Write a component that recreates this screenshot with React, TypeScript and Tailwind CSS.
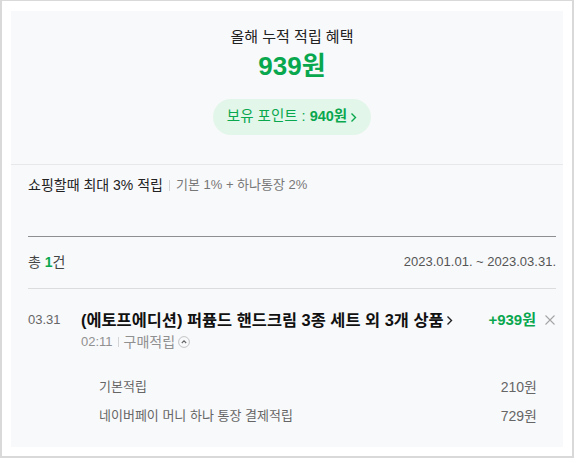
import React from "react";

function ChevronRight({ className = "", color = "#222" }: { className?: string; color?: string }) {
  return (
    <svg className={className} width="7" height="11" viewBox="0 0 7 11" fill="none">
      <path d="M1.5 1.5L5.5 5.5L1.5 9.5" stroke={color} strokeWidth="1.4" />
    </svg>
  );
}

function CloseX() {
  return (
    <svg className="ml-[9px] mr-[1px]" width="10" height="10" viewBox="0 0 10 10" fill="none">
      <path d="M0.5 0.5L9.5 9.5M9.5 0.5L0.5 9.5" stroke="#a5a5a5" strokeWidth="1.1" />
    </svg>
  );
}

function CircleUp() {
  return (
    <svg className="ml-[3px]" width="12" height="12" viewBox="0 0 12 12" fill="none">
      <circle cx="6" cy="6" r="5.4" stroke="#bdbdbd" strokeWidth="0.9" />
      <path d="M3.8 7L6 4.8L8.2 7" stroke="#666" strokeWidth="1.1" />
    </svg>
  );
}

export default function App() {
  return (
    <div className="w-[574px] h-[458px] bg-white border-t border-x-2 border-b-2 border-[#d9d9d9] pt-[10px] px-[9px] pb-[9px] font-['Liberation_Sans','Noto_Sans_CJK_KR',sans-serif]">
      <div className="h-[436px] bg-[#f8f9fb] flex flex-col">
        {/* Header summary */}
        <div className="flex flex-col items-center pl-[10px] pt-[16px] pb-[29px] border-b border-[#e6e8eb]">
          <div className="text-[15px] leading-[20px] text-[#222]">올해 누적 적립 혜택</div>
          <div className="mt-[3px] text-[26px] leading-[32px] font-bold text-[#09a74e]">939원</div>
          <div className="mt-[17px] h-[36px] w-[158px] rounded-full bg-[#e3f6ea] flex items-center justify-center text-[14.5px] text-[#09a74e]">
            <span>보유 포인트 : </span>
            <span className="ml-[4px] font-bold">940원</span>
            <ChevronRight className="ml-[3px]" color="#09a74e" />
          </div>
        </div>

        {/* Content */}
        <div className="pl-[17px] pr-[7px] flex flex-col">
          <div className="pt-[10px] flex items-center leading-[20px]">
            <span className="text-[14px] text-[#222]">쇼핑할때 최대 3% 적립</span>
            <span className="mx-[6px] w-px h-[11px] bg-[#d5d5d5]" />
            <span className="text-[13px] text-[#777]">기본 1% + 하나통장 2%</span>
          </div>

          <div className="mt-[41px] border-t border-[#8f8f8f] pt-[15px] pb-[16px] border-b-[#dcdcdc] border-b flex items-center justify-between text-[13px] leading-[20px]">
            <span className="text-[14px] text-[#444]">
              총 <span className="text-[#09a74e] font-semibold">1</span>건
            </span>
            <span className="text-[#555]">2023.01.01. ~ 2023.03.31.</span>
          </div>

          <div className="pt-[20px] flex">
            <div className="w-[53px] text-[13px] leading-[22px] text-[#666]">03.31</div>
            <div className="flex-1 flex flex-col">
              <div className="flex items-center justify-between">
                <div className="flex items-center text-[16.4px] leading-[22px] font-bold text-[#111]">
                  <span>(에토프에디션) 퍼퓸드 핸드크림 3종 세트 외 3개 상품</span>
                  <ChevronRight className="ml-[2px]" color="#222" />
                </div>
                <div className="flex items-center">
                  <span className="text-[15px] leading-[22px] font-bold text-[#09a74e]">+939원</span>
                  <CloseX />
                </div>
              </div>
              <div className="mt-[2px] flex items-center leading-[18px] text-[#909090]">
                <span className="text-[13px]">02:11</span>
                <span className="mx-[5px] w-px h-[10px] bg-[#d5d5d5]" />
                <span className="text-[14px]">구매적립</span>
                <CircleUp />
              </div>
            </div>
          </div>

          <div className="mt-[26px] pl-[71px] pr-[19px] flex flex-col gap-[9px] leading-[20px] text-[#666]">
            <div className="flex justify-between">
              <span className="text-[13px]">기본적립</span>
              <span className="text-[14px]">210원</span>
            </div>
            <div className="flex justify-between">
              <span className="text-[13px]">네이버페이 머니 하나 통장 결제적립</span>
              <span className="text-[14px]">729원</span>
            </div>
          </div>
        </div>
      </div>
    </div>
  );
}
